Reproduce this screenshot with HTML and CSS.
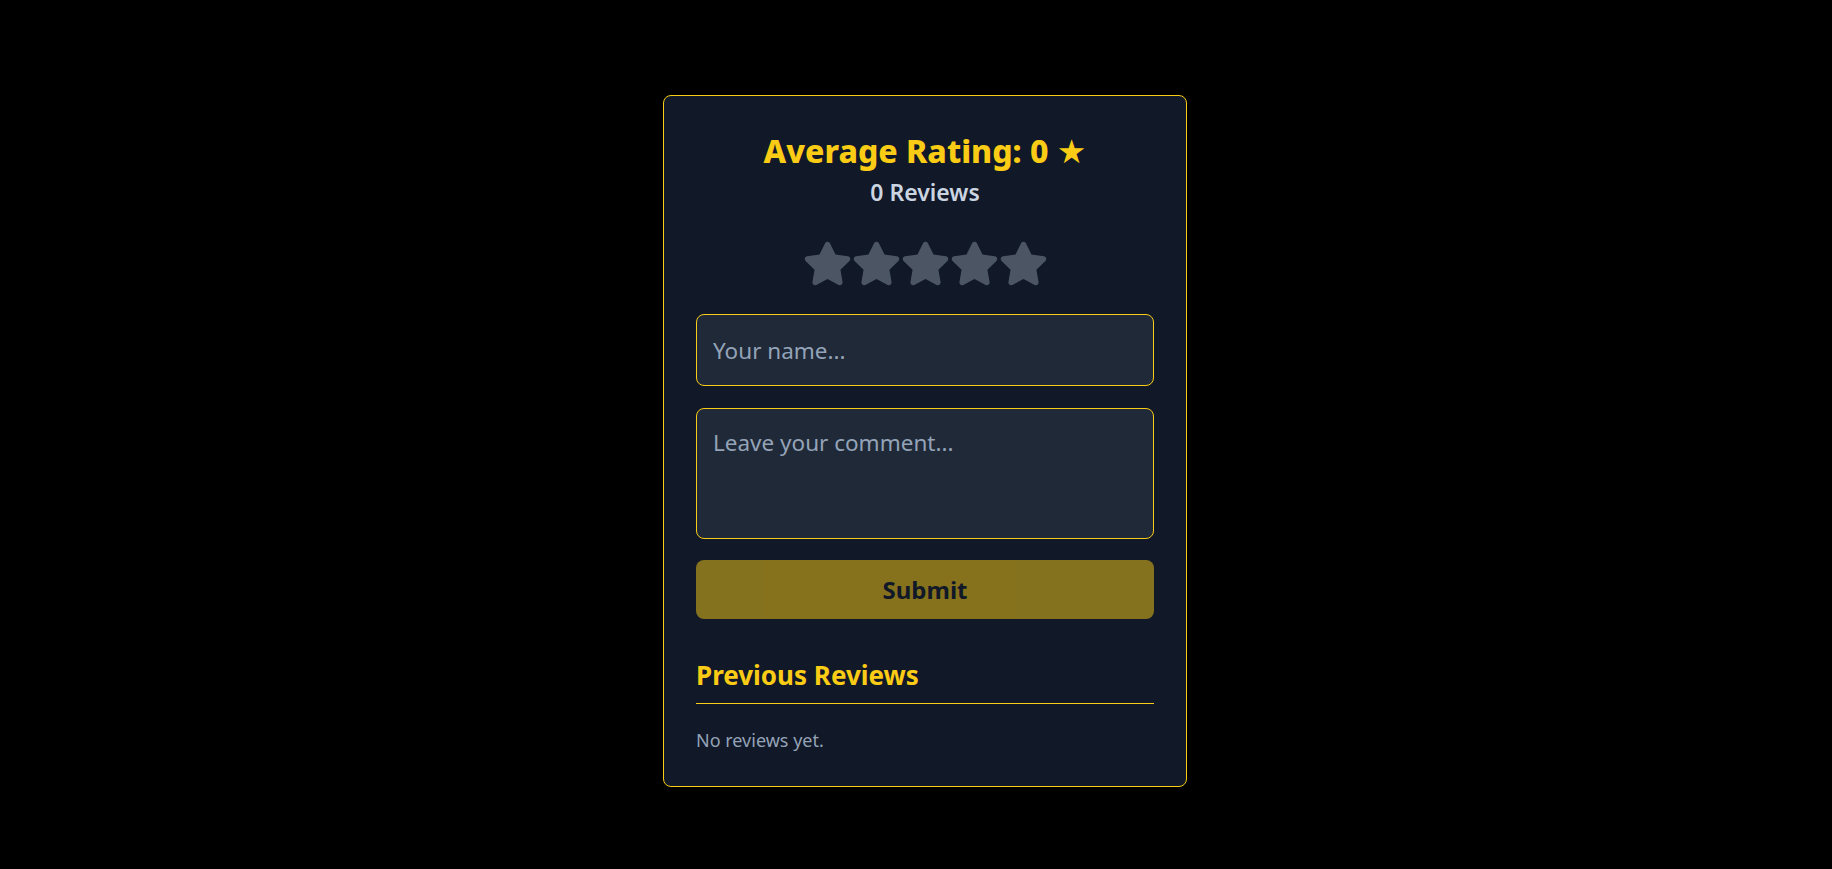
FILE: index.html
```html
<!DOCTYPE html>
<html lang="en">
<head>
<meta charset="utf-8">
<title>Reviews</title>
<link rel="stylesheet" href="styles.css">
</head>
<body>
<div class="page">
  <div class="card">
    <div class="summary">
      <h2 class="avg">Average Rating: 0 <span class="avg-star">★</span></h2>
      <p class="count">0 Reviews</p>
    </div>
    <div class="stars">
      <svg class="star" viewBox="0 0 576 512" aria-hidden="true"><path d="M259.3 17.8L194 150.2 47.9 171.5c-26.2 3.8-36.7 36.1-17.7 54.6l105.7 103-25 145.5c-4.5 26.3 23.2 46 46.4 33.7L288 439.6l130.7 68.7c23.2 12.2 50.9-7.4 46.4-33.7l-25-145.5 105.7-103c19-18.5 8.5-50.8-17.7-54.6L382 150.2 316.7 17.8c-11.7-23.6-45.6-23.9-57.4 0z"/></svg>
      <svg class="star" viewBox="0 0 576 512" aria-hidden="true"><path d="M259.3 17.8L194 150.2 47.9 171.5c-26.2 3.8-36.7 36.1-17.7 54.6l105.7 103-25 145.5c-4.5 26.3 23.2 46 46.4 33.7L288 439.6l130.7 68.7c23.2 12.2 50.9-7.4 46.4-33.7l-25-145.5 105.7-103c19-18.5 8.5-50.8-17.7-54.6L382 150.2 316.7 17.8c-11.7-23.6-45.6-23.9-57.4 0z"/></svg>
      <svg class="star" viewBox="0 0 576 512" aria-hidden="true"><path d="M259.3 17.8L194 150.2 47.9 171.5c-26.2 3.8-36.7 36.1-17.7 54.6l105.7 103-25 145.5c-4.5 26.3 23.2 46 46.4 33.7L288 439.6l130.7 68.7c23.2 12.2 50.9-7.4 46.4-33.7l-25-145.5 105.7-103c19-18.5 8.5-50.8-17.7-54.6L382 150.2 316.7 17.8c-11.7-23.6-45.6-23.9-57.4 0z"/></svg>
      <svg class="star" viewBox="0 0 576 512" aria-hidden="true"><path d="M259.3 17.8L194 150.2 47.9 171.5c-26.2 3.8-36.7 36.1-17.7 54.6l105.7 103-25 145.5c-4.5 26.3 23.2 46 46.4 33.7L288 439.6l130.7 68.7c23.2 12.2 50.9-7.4 46.4-33.7l-25-145.5 105.7-103c19-18.5 8.5-50.8-17.7-54.6L382 150.2 316.7 17.8c-11.7-23.6-45.6-23.9-57.4 0z"/></svg>
      <svg class="star" viewBox="0 0 576 512" aria-hidden="true"><path d="M259.3 17.8L194 150.2 47.9 171.5c-26.2 3.8-36.7 36.1-17.7 54.6l105.7 103-25 145.5c-4.5 26.3 23.2 46 46.4 33.7L288 439.6l130.7 68.7c23.2 12.2 50.9-7.4 46.4-33.7l-25-145.5 105.7-103c19-18.5 8.5-50.8-17.7-54.6L382 150.2 316.7 17.8c-11.7-23.6-45.6-23.9-57.4 0z"/></svg>
    </div>
    <form class="form">
      <input class="field name" type="text" placeholder="Your name...">
      <textarea class="field comment" placeholder="Leave your comment..."></textarea>
      <button class="submit" type="button" disabled>Submit</button>
    </form>
    <div class="previous">
      <h3 class="prev-title">Previous Reviews</h3>
      <p class="empty">No reviews yet.</p>
    </div>
  </div>
</div>
</body>
</html>
```
FILE: styles.css
```css
* { box-sizing: border-box; }

html, body {
  margin: 0;
  padding: 0;
  background: #000;
}

body {
  font-family: "Noto Sans", "Open Sans", sans-serif;
  color: #e5e7eb;
}

.page {
  display: flex;
  justify-content: center;
  padding: 95px 0 0 18px;
  min-height: 869px;
}

.card {
  width: 524px;
  background: #111827;
  border: 1px solid #facc15;
  border-radius: 8px;
  padding: 32px;
  align-self: flex-start;
}

.summary {
  text-align: center;
}

.avg {
  margin: 3px 0 0;
  font-size: 32px;
  line-height: 40px;
  font-weight: 800;
  color: #facc15;
}

.avg-star {
  font-family: "DejaVu Sans", sans-serif;
  font-size: 33px;
}

.count {
  margin: 4px 0 0;
  font-size: 23px;
  line-height: 32px;
  font-weight: 600;
  color: #cbd5e1;
}

.stars {
  display: flex;
  justify-content: center;
  margin-top: 31px;
}

.star {
  width: 49px;
  height: 49px;
  fill: #4b5563;
  display: block;
}

.form {
  display: flex;
  flex-direction: column;
  margin-top: 26px;
}

.field {
  width: 100%;
  background: #1f2937;
  border: 1px solid #facc15;
  border-radius: 8px;
  color: #e5e7eb;
  font-family: inherit;
  font-size: 22.5px;
  padding: 0 16px;
  outline: none;
}

.field::placeholder {
  color: #94a3b8;
  opacity: 1;
}

.name {
  height: 72px;
}

.comment {
  height: 131px;
  margin-top: 22px;
  padding-top: 17px;
  line-height: 1.5;
  resize: none;
  display: block;
}

.submit {
  margin-top: 21px;
  height: 59px;
  width: 100%;
  border: none;
  border-radius: 8px;
  background: #facc15;
  opacity: 0.5;
  color: #111827;
  font-family: inherit;
  font-size: 24px;
  font-weight: 700;
}

.previous {
  margin-top: 40px;
}

.prev-title {
  margin: 0;
  padding-bottom: 12px;
  border-bottom: 1px solid #facc15;
  font-size: 26px;
  line-height: 32px;
  font-weight: 700;
  color: #facc15;
}

.empty {
  margin: 23px 0 0;
  font-size: 18px;
  line-height: 27px;
  color: #94a3b8;
}
```
